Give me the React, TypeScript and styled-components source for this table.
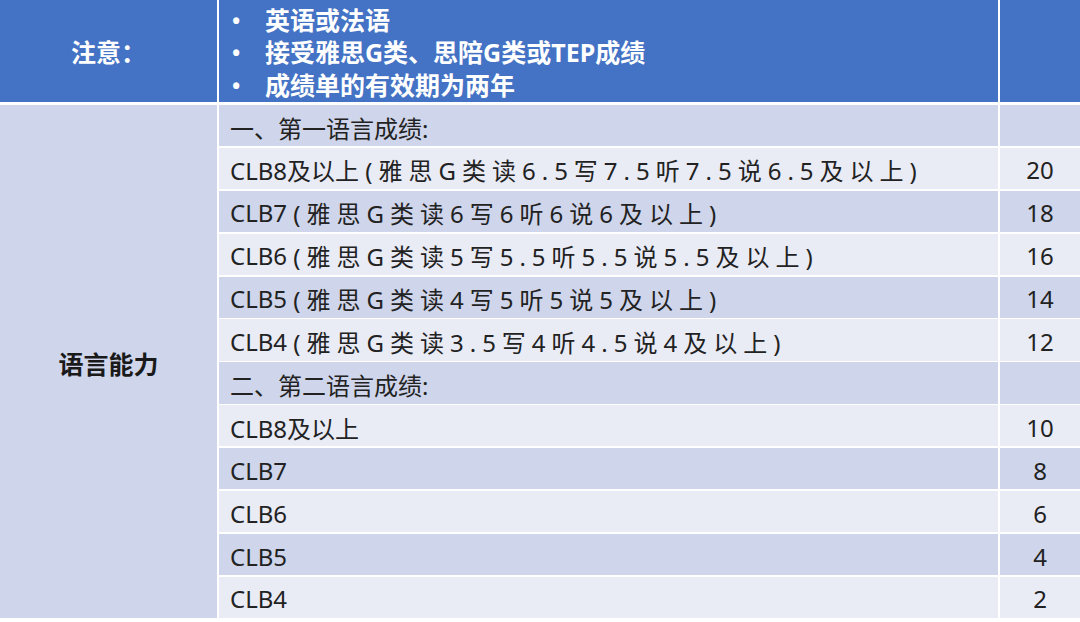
import React from "react";
import styled, { createGlobalStyle } from "styled-components";

const GlobalStyle = createGlobalStyle`
  html, body {
    margin: 0;
    padding: 0;
    background: #fff;
  }
  body {
    font-family: "Noto Sans", "Noto Sans CJK SC", sans-serif;
  }
`;

const Sheet = styled.div`
  width: 1080px;
  display: flex;
  flex-direction: column;
  gap: 3px;
`;

const Grid = styled.div<{ $height: number; $rows: number }>`
  display: grid;
  grid-template-columns: 217px 779px 80px;
  grid-template-rows: repeat(${(p) => p.$rows}, 1fr);
  column-gap: 2px;
  row-gap: 1.75px;
  height: ${(p) => p.$height}px;
`;

const HeadCell = styled.div<{ $center?: boolean }>`
  background: #4472c4;
  color: #fff;
  font-weight: 700;
  font-size: 25px;
  display: flex;
  align-items: center;
  justify-content: ${(p) => (p.$center ? "center" : "flex-start")};
  padding: ${(p) => (p.$center ? "0" : "0 0 0 11px")};
`;

const NoteList = styled.ul`
  list-style: none;
  margin: 0;
  padding: 3px 0 0;
  line-height: 32.5px;
`;

const NoteItem = styled.li`
  display: flex;
  align-items: center;

  &::before {
    content: "•";
    width: 33px;
    font-size: 22px;
    padding-left: 2px;
  }
`;

const SideCell = styled.div`
  grid-column: 1;
  grid-row: 1 / -1;
  background: #cfd5ea;
  color: #1a1a1a;
  font-weight: 700;
  font-size: 25px;
  display: flex;
  align-items: center;
  justify-content: center;
  padding-top: 4px;
`;

const Cell = styled.div<{ $dark: boolean; $center?: boolean }>`
  background: ${(p) => (p.$dark ? "#cfd5ea" : "#e9ebf5")};
  color: #222;
  font-size: 24px;
  display: flex;
  align-items: center;
  justify-content: ${(p) => (p.$center ? "center" : "flex-start")};
  padding: ${(p) => (p.$center ? "3px 0 0 0" : "3px 0 0 11px")};
  white-space: pre;
`;

const Spaced = styled.span`
  letter-spacing: 6px;
`;

type Row = { label: string; detail?: string; score?: string };

const rows: Row[] = [
  { label: "一、第一语言成绩:" },
  { label: "CLB8及以上 ", detail: "(雅思G类读6.5写7.5听7.5说6.5及以上)", score: "20" },
  { label: "CLB7 ", detail: "(雅思G类读6写6听6说6及以上)", score: "18" },
  { label: "CLB6 ", detail: "(雅思G类读5写5.5听5.5说5.5及以上)", score: "16" },
  { label: "CLB5 ", detail: "(雅思G类读4写5听5说5及以上)", score: "14" },
  { label: "CLB4 ", detail: "(雅思G类读3.5写4听4.5说4及以上)", score: "12" },
  { label: "二、第二语言成绩:" },
  { label: "CLB8及以上", score: "10" },
  { label: "CLB7", score: "8" },
  { label: "CLB6", score: "6" },
  { label: "CLB5", score: "4" },
  { label: "CLB4", score: "2" },
];

const notes = ["英语或法语", "接受雅思G类、思陪G类或TEP成绩", "成绩单的有效期为两年"];

export default function App() {
  return (
    <>
      <GlobalStyle />
      <Sheet>
        <Grid $height={102} $rows={1}>
          <HeadCell $center>注意：</HeadCell>
          <HeadCell>
            <NoteList>
              {notes.map((n) => (
                <NoteItem key={n}>{n}</NoteItem>
              ))}
            </NoteList>
          </HeadCell>
          <HeadCell />
        </Grid>
        <Grid $height={513} $rows={rows.length}>
          <SideCell>语言能力</SideCell>
          {rows.map((r, i) => (
            <React.Fragment key={i}>
              <Cell $dark={i % 2 === 0}>
                {r.label}
                {r.detail && <Spaced>{r.detail}</Spaced>}
              </Cell>
              <Cell $dark={i % 2 === 0} $center>
                {r.score ?? ""}
              </Cell>
            </React.Fragment>
          ))}
        </Grid>
      </Sheet>
    </>
  );
}
